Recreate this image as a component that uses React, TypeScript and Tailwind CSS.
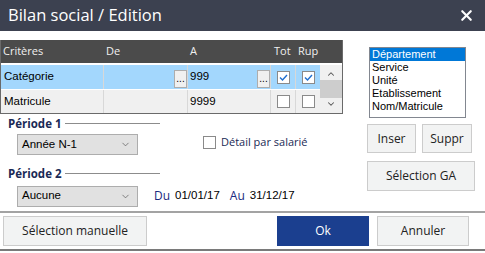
import { ChevronDown, ChevronUp, X } from "lucide-react"

const sans = "font-['Segoe_UI','Open_Sans','Noto_Sans',sans-serif]"
const grid = "font-['Liberation_Sans',Arial,sans-serif]"

function Check({ on }: { on?: boolean }) {
  return (
    <div className="flex h-[13px] w-[13px] shrink-0 items-center justify-center border border-[#8a8a8a] bg-white">
      {on && (
        <svg width="9" height="7" viewBox="0 0 9 7">
          <path d="M1 3.5 L3.5 6 L8 1" fill="none" stroke="#1f6fd0" strokeWidth="1.4" />
        </svg>
      )}
    </div>
  )
}

function Dots() {
  return (
    <div className="flex h-[18px] w-[13px] items-end justify-center border border-[#adadad] bg-[#f0f0f0] pb-[3px] text-[10px] leading-none text-black">
      ...
    </div>
  )
}

function Select({ value }: { value: string }) {
  return (
    <div className={`flex h-[21px] w-[121px] shrink-0 items-center justify-between border border-[#adadad] bg-[#e1e1e1] pl-[4px] pr-[6px] text-[11.5px] text-black ${grid}`}>
      <span>{value}</span>
      <ChevronDown size={11} strokeWidth={1.5} className="text-[#555]" />
    </div>
  )
}

function Btn({ label, className }: { label: string; className: string }) {
  return (
    <div className={`flex items-center justify-center border border-[#cccccc] bg-[#f2f3f3] text-[12px] text-[#222] ${className}`}>
      {label}
    </div>
  )
}

export default function App() {
  return (
    <div className={`flex h-[253px] w-[485px] flex-col bg-white ${sans}`}>
      <div className="flex h-[31px] items-center justify-between bg-[#3c4150] pl-[8px] pr-[10px] text-white">
        <span className="text-[16.5px] leading-none">Bilan social / Edition</span>
        <X size={17} strokeWidth={3} />
      </div>

      <div className="flex flex-1">
        <div className="flex w-[343px] flex-col pt-[9px]">
          <div className="border-b border-l border-r border-[#6a6a6a]">
            <div className={`flex h-[23px] items-center bg-[#4b4b4b] text-[11px] text-[#f0f0f0] ${sans}`}>
              <span className="w-[105px] pl-[2px]">Critères</span>
              <span className="w-[82px]">De</span>
              <span className="w-[84px] pl-[2px]">A</span>
              <span className="w-[25px] pl-[2px]">Tot</span>
              <span className="pl-[1px]">Rup</span>
            </div>
            <div className="h-[2px] bg-white" />
            <div className={`flex text-[11.5px] text-black ${grid}`}>
              <div className="flex flex-1 flex-col">
                <div className="flex h-[24px] bg-[#a3d7fd]">
                  <div className="w-[103px] border-r border-[#d8d8d8] pl-[3px] pt-[3px]">Catégorie</div>
                  <div className="flex w-[83px] items-end justify-end pb-[1px]"><Dots /></div>
                  <div className="flex w-[83px] items-start justify-between border-l border-[#d8d8d8] pl-[2px] pt-[3px]">
                    <span>999</span>
                    <div className="self-end pb-[1px]"><Dots /></div>
                  </div>
                  <div className="flex w-[25px] items-center justify-center border-l border-[#d8d8d8]"><Check on /></div>
                  <div className="flex w-[25px] items-center justify-center border-l border-[#d8d8d8]"><Check on /></div>
                </div>
                <div className="h-[1px] bg-white" />
                <div className="flex h-[23px] bg-[#f0f0f0]">
                  <div className="w-[103px] border-r border-[#d8d8d8] pl-[3px] pt-[3px]">Matricule</div>
                  <div className="w-[83px]" />
                  <div className="w-[83px] border-l border-[#d8d8d8] pl-[2px] pt-[3px]">9999</div>
                  <div className="flex w-[25px] items-center justify-center border-l border-[#d8d8d8]"><Check /></div>
                  <div className="flex w-[25px] items-center justify-center border-l border-[#d8d8d8]"><Check /></div>
                </div>
              </div>
              <div className="flex w-[22px] flex-col items-center justify-between bg-[#f0f0f0] py-[4px]">
                <ChevronUp size={10} strokeWidth={2.5} className="text-[#555]" />
                <div className="h-[18px] w-full bg-[#cdcdcd]" />
                <ChevronDown size={10} strokeWidth={2.5} className="text-[#555]" />
              </div>
            </div>
          </div>

          <div className="flex flex-col pl-[8px] pt-[1px]">
            <div className="flex items-center gap-[3px]">
              <span className="text-[11.5px] font-bold text-[#1a2a55]">Période 1</span>
              <div className="h-px w-[95px] bg-[#8c8c8c]" />
            </div>
            <div className="flex items-start pl-[9px] pt-[2px]">
              <Select value="Année N-1" />
              <div className="ml-[65px] flex items-center gap-[5px]">
                <Check />
                <span className="whitespace-nowrap text-[11px] text-[#1a2a55]">Détail par salarié</span>
              </div>
            </div>
            <div className="flex items-center gap-[3px] pt-[10px]">
              <span className="text-[11.5px] font-bold text-[#1a2a55]">Période 2</span>
              <div className="h-px w-[95px] bg-[#8c8c8c]" />
            </div>
            <div className="flex items-center pl-[9px] pt-[3px]">
              <Select value="Aucune" />
              <span className="ml-[16px] text-[12px] text-[#1a2a80]">Du</span>
              <span className={`ml-[5px] text-[11.5px] text-black ${grid}`}>01/01/17</span>
              <span className="ml-[10px] text-[12px] text-[#1a2a80]">Au</span>
              <span className={`ml-[5px] text-[11.5px] text-black ${grid}`}>31/12/17</span>
            </div>
          </div>
        </div>

        <div className="flex flex-col pl-[26px] pt-[16px]">
          <div className={`flex h-[71px] w-[97px] flex-col border border-[#828790] bg-white text-[11px] leading-[13px] text-black ${grid}`}>
            <span className="bg-[#0078d7] pl-[2px] text-white">Département</span>
            <span className="pl-[2px]">Service</span>
            <span className="pl-[2px]">Unité</span>
            <span className="pl-[2px]">Etablissement</span>
            <span className="pl-[2px]">Nom/Matricule</span>
          </div>
          <div className="-ml-[2px] mt-[6px] flex gap-[6px]">
            <Btn label="Inser" className="h-[29px] w-[49px]" />
            <Btn label="Suppr" className="h-[29px] w-[50px]" />
          </div>
          <Btn label="Sélection GA" className="-ml-[2px] mt-[8px] h-[30px] w-[108px]" />
        </div>
      </div>

      <div className="h-[2px] bg-[#a3a3a3]" />
      <div className="flex h-[36px] items-center pl-[3px]">
        <Btn label="Sélection manuelle" className="h-[30px] w-[144px]" />
        <div className="ml-[130px] flex h-[30px] w-[92px] items-center justify-center bg-[#1b3f8f] text-[12px] text-white">Ok</div>
        <Btn label="Annuler" className="ml-[8px] h-[30px] w-[92px]" />
      </div>
      <div className="h-[2px] bg-[#7a7a7a]" />
      <div className="h-[2px]" />
    </div>
  )
}
